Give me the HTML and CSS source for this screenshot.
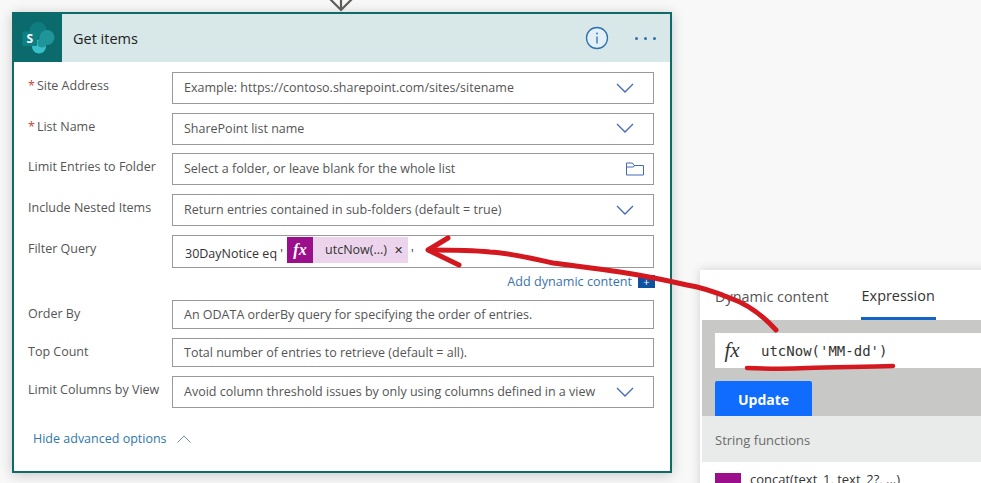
FILE: index.html
```html
<!DOCTYPE html>
<html lang="en">
<head>
<meta charset="utf-8">
<title>Get items</title>
<link rel="stylesheet" href="styles.css">
</head>
<body>
<main class="canvas">
  <svg class="connector" width="26" height="12" viewBox="0 0 26 12"><path d="M2-1l11 11L24-1M13 0v10" fill="none" stroke="#605e5c" stroke-width="2.200"/></svg>
  <section class="card">
    <header class="card-head">
      <div class="logo">
        <svg width="34" height="34" viewBox="0 0 34 34">
          <circle cx="17" cy="9.500" r="8.500" fill="#0f7c80"/>
          <circle cx="26" cy="16.500" r="7.500" fill="#1f959a"/>
          <circle cx="18" cy="25.500" r="7" fill="#37c0c8"/>
          <circle cx="21" cy="22" r="4.500" fill="#1f959a"/>
          <rect x="1.500" y="10.500" width="14.500" height="14.500" rx="1" fill="#0e8084"/>
          <text x="8.700" y="22" class="logo-s">S</text>
        </svg>
      </div>
      <h1 class="card-title">Get items</h1>
      <svg class="info" width="24" height="24" viewBox="0 0 24 24"><circle cx="12" cy="12" r="10.500" fill="#e3f0f8" stroke="#2f6fb3" stroke-width="1.300"/><path d="M12 10.500v7" stroke="#2f6fb3" stroke-width="1.300"/><circle cx="12" cy="7.500" r=".9" fill="#2f6fb3"/></svg>
      <div class="more"><i></i><i></i><i></i></div>
    </header>
    <div class="form">
      <div class="row">
        <label class="lab"><span class="req">*</span>Site Address</label>
        <div class="field"><span>Example: https://contoso.sharepoint.com/sites/sitename</span><svg class="chev" width="18" height="10" viewBox="0 0 18 10"><path d="M1 1l8 8 8-8" fill="none" stroke="#4469b8" stroke-width="1.300"/></svg></div>
      </div>
      <div class="row">
        <label class="lab"><span class="req">*</span>List Name</label>
        <div class="field"><span>SharePoint list name</span><svg class="chev" width="18" height="10" viewBox="0 0 18 10"><path d="M1 1l8 8 8-8" fill="none" stroke="#4469b8" stroke-width="1.300"/></svg></div>
      </div>
      <div class="row">
        <label class="lab">Limit Entries to Folder</label>
        <div class="field"><span>Select a folder, or leave blank for the whole list</span><svg class="folder" width="18" height="14" viewBox="0 0 18 14"><path d="M.5 13V1h6l1.500 2.500h9.500V13zM.5 5h7l1-1.500" fill="none" stroke="#4469b8"/></svg></div>
      </div>
      <div class="row">
        <label class="lab">Include Nested Items</label>
        <div class="field"><span>Return entries contained in sub-folders (default = true)</span><svg class="chev" width="18" height="10" viewBox="0 0 18 10"><path d="M1 1l8 8 8-8" fill="none" stroke="#4469b8" stroke-width="1.300"/></svg></div>
      </div>
      <div class="row row-filter">
        <label class="lab">Filter Query</label>
        <div class="field field-token">
          <span class="dark">30DayNotice eq '</span>
          <span class="token"><b class="token-fx">fx</b><span class="token-text">utcNow(...)</span><span class="token-x">✕</span></span>
          <span class="dark">'</span>
        </div>
      </div>
      <div class="dynamic"><a class="dyn-link">Add dynamic content</a><span class="dyn-plus">+</span></div>
      <div class="row row-short">
        <label class="lab">Order By</label>
        <div class="field"><span>An ODATA orderBy query for specifying the order of entries.</span></div>
      </div>
      <div class="row row-short">
        <label class="lab">Top Count</label>
        <div class="field"><span>Total number of entries to retrieve (default = all).</span></div>
      </div>
      <div class="row">
        <label class="lab">Limit Columns by View</label>
        <div class="field"><span>Avoid column threshold issues by only using columns defined in a view</span><svg class="chev" width="18" height="10" viewBox="0 0 18 10"><path d="M1 1l8 8 8-8" fill="none" stroke="#4469b8" stroke-width="1.300"/></svg></div>
      </div>
      <div class="advanced"><a class="adv-link">Hide advanced options</a><svg width="14" height="8" viewBox="0 0 14 8"><path d="M.5 7.500L7 1l6.500 6.500" fill="none" stroke="#6d8fb0"/></svg></div>
    </div>
  </section>

  <aside class="panel">
    <nav class="tabs"><span class="tab">Dynamic content</span><span class="tab tab-on">Expression</span></nav>
    <div class="expr">
      <div class="expr-input"><i class="expr-fx">fx</i><code class="expr-code">utcNow('MM-dd')</code></div>
      <button class="update">Update</button>
    </div>
    <div class="group">String functions</div>
    <div class="fn"><span class="fn-icon"></span><span class="fn-text">concat(text_1, text_2?, ...)</span></div>
  </aside>

  <svg class="scribble" width="981" height="483" viewBox="0 0 981 483">
    <g fill="none" stroke="#d3191f" stroke-linecap="round" stroke-linejoin="round">
      <path stroke-width="5" d="M776 330C765 318 750 305 730 298C715 292 700 287 687 285C665 280 640 275 620 272C595 268 575 266 553 263C530 258 510 253 490 252C470 250 445 250 429 250"/>
      <path stroke-width="5" d="M448 238L428 250L459 265"/>
      <path stroke-width="4.500" d="M747 368C770 369 790 369 807 368C835 367 865 367 893 366"/>
    </g>
  </svg>
</main>
</body>
</html>
```
FILE: styles.css
```css
* { box-sizing: border-box; }
html, body { margin: 0; height: 100%; }
body { background: #f8f8f8; font-family: "Open Sans", "Noto Sans", sans-serif; overflow: hidden; }
.canvas { position: relative; width: 981px; height: 483px; padding: 12px 0 0 12px; overflow: hidden; }
.connector { position: absolute; left: 328px; top: 0; }

.card { width: 660px; height: 461px; background: #fff; border: 2px solid #0f6b68; box-shadow: 0 2px 12px rgba(0,0,0,.2); }
.card-head { display: flex; align-items: center; height: 48px; background: #d8e8e9; }
.logo { width: 48px; height: 48px; background: #0b6a6c; display: flex; align-items: center; justify-content: center; }
.logo-s { font: 700 12px "Open Sans", sans-serif; fill: #fff; text-anchor: middle; }
.card-title { flex: 1; margin: 0 0 0 11px; font-size: 14.500px; font-weight: 400; color: #222; }
.info { margin-right: 26px; }
.more { display: flex; gap: 6px; margin-right: 14px; }
.more i { width: 3px; height: 3px; border-radius: 50%; background: #2f6fb3; }

.form { padding: 10px 16px 0 14px; }
.row { display: flex; align-items: flex-start; height: 32px; margin-bottom: 8.700px; }
.row-filter { height: 33px; }
.row-short { height: 29px; margin-bottom: 9px; }
.lab { width: 144px; flex: none; padding-top: 4px; font-size: 12.500px; line-height: 20px; color: #555; white-space: nowrap; }
.req { color: #c4473a; margin-right: 2px; }
.field { flex: 1; display: flex; align-items: center; justify-content: space-between; height: 100%; padding: 0 19px 1px 11px; border: 1px solid #999; font-size: 12.500px; color: #555; white-space: nowrap; }
.field-token { justify-content: flex-start; padding: 0 0 0 12px; }
.dark { color: #333; padding-top: 5px; }
.folder { margin: 0 -10px 0 0; }
.token { display: flex; align-items: center; width: 121px; height: 26px; margin: -3px 3px 0 4px; background: #ecd5ec; color: #333; }
.token-fx { width: 26px; height: 26px; flex: none; background: #9c0f8c; color: #fff; font: italic 700 16px "Liberation Serif", serif; display: flex; align-items: center; justify-content: center; }
.token-text { margin-left: 12px; }
.token-x { margin: 0 0 0 7px; font-size: 11px; }

.dynamic { display: flex; justify-content: flex-end; align-items: center; height: 22px; margin: -6px -1px 8px 0; }
.dyn-link { font-size: 12.600px; color: #3b73a8; }
.dyn-plus { width: 17px; height: 13px; margin-left: 6px; background: #0f52a0; color: #fff; font-size: 11px; line-height: 13px; text-align: center; }

.advanced { display: flex; align-items: center; gap: 10px; margin: 22px 0 0 5px; }
.adv-link { font-size: 12.500px; color: #2f78a8; }

.panel { position: absolute; left: 700px; top: 270px; width: 300px; height: 230px; background: #fff; box-shadow: 0 0 10px rgba(0,0,0,.16); }
.tabs { display: flex; height: 50px; padding-left: 15px; gap: 32px; }
.tab { display: flex; align-items: center; height: 50px; padding-top: 3px; font-size: 14.400px; color: #555; white-space: nowrap; }
.tab-on { color: #333; border-bottom: 3px solid #1464c8; font-weight: 500; padding: 3px 1px 0; }
.expr { margin-left: 2px; height: 96px; background: #c8c9c7; padding: 13px 0 0 13px; }
.expr-input { display: flex; align-items: center; height: 35px; background: #fff; }
.expr-fx { width: 34px; text-align: center; font: italic 400 21px "Liberation Serif", serif; color: #333; margin-right: 12px; }
.expr-code { font: 14px "DejaVu Sans Mono", monospace; color: #333; }
.update { display: block; width: 97px; height: 35px; margin-top: 13px; padding: 2px 0 0; border: 0; border-radius: 2px 2px 0 0; background: #0f6cff; color: #fff; font: 700 14px "Open Sans", sans-serif; }
.group { margin-left: 2px; height: 46px; padding: 0 0 0 13px; background: #e8ebe9; font-size: 13px; line-height: 48px; color: #6b6b6b; }
.fn { display: flex; gap: 9px; padding: 11px 0 0 15px; font-size: 13px; color: #333; white-space: nowrap; }
.fn-icon { width: 26px; height: 26px; background: #9c0f8c; flex: none; }
.fn-text { margin-top: -3px; }
.scribble { position: absolute; left: 0; top: 0; pointer-events: none; }
```
